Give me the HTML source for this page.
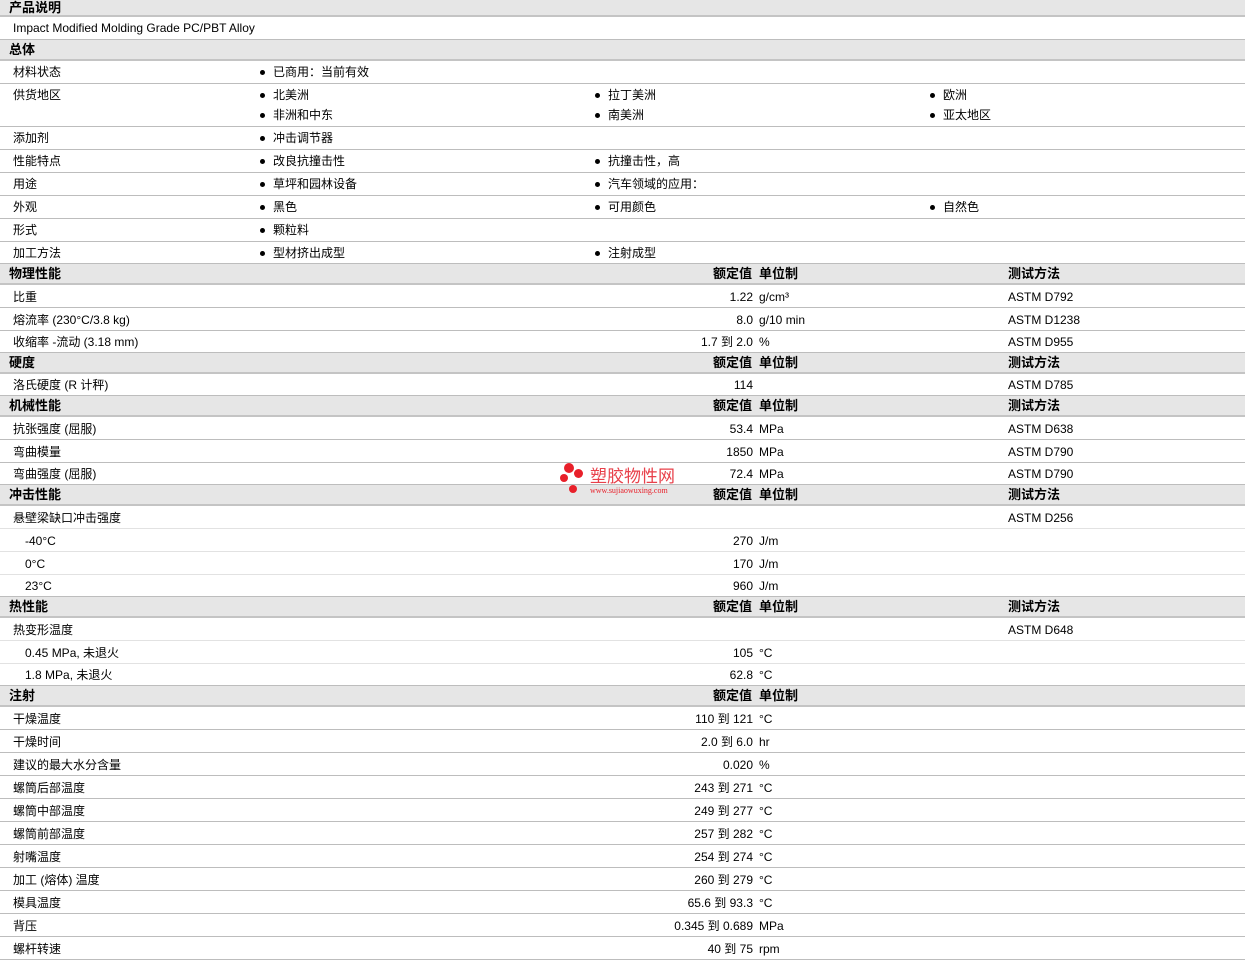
<!DOCTYPE html>
<html><head><meta charset="utf-8"><style>
*{margin:0;padding:0;box-sizing:border-box}
body{width:1245px;height:961px;background:#fff;position:relative;overflow:hidden;font-family:"Liberation Sans","Noto Sans CJK SC",sans-serif;font-size:12px;color:#000}
.r{position:absolute;left:0;width:1245px;border-bottom:1px solid #bdbdbd}
.r.l{border-bottom:1px solid #e2e2e2}
.h{background:#e6e6e6;font-weight:bold;font-size:13px;border-bottom:2px solid #c4c4c4}
.t{position:absolute;white-space:nowrap;line-height:14px}
.b::before{content:"";position:absolute;left:-13px;top:5px;width:5px;height:5px;border-radius:50%;background:#000}
.v{text-align:right;right:492px}
.wm{position:absolute;left:560px;top:463px}
</style></head><body>
<div id="c"></div>
<div class="wm">
<div style="position:absolute;left:4px;top:0;width:10px;height:10px;border-radius:50%;background:#e8202a"></div>
<div style="position:absolute;left:14px;top:6px;width:9px;height:9px;border-radius:50%;background:#e8202a"></div>
<div style="position:absolute;left:0;top:11px;width:8px;height:8px;border-radius:50%;background:#e8202a"></div>
<div style="position:absolute;left:9px;top:22px;width:8px;height:8px;border-radius:50%;background:#e8202a"></div>
<div class="t" style="left:30px;top:5px;font-size:17px;line-height:18px;color:#e8404a">塑胶物性网</div>
<div class="t" style="left:30px;top:23px;font-size:8px;line-height:10px;color:#e8202a;font-family:'Liberation Serif',serif">www.sujiaowuxing.com</div>
</div>
<script>
const rows=[
['h',0,17,'产品说明'],
['d',17,23,[[13,'Impact Modified Molding Grade PC/PBT Alloy']]],
['h',40,21,'总体'],
['d',61,23,[[13,'材料状态'],['b273','已商用：当前有效']]],
['d',84,43,[[13,'供货地区'],['b273','北美洲'],['b608','拉丁美洲'],['b943','欧洲'],['b273','非洲和中东',20],['b608','南美洲',20],['b943','亚太地区',20]]],
['d',127,23,[[13,'添加剂'],['b273','冲击调节器']]],
['d',150,23,[[13,'性能特点'],['b273','改良抗撞击性'],['b608','抗撞击性，高']]],
['d',173,23,[[13,'用途'],['b273','草坪和园林设备'],['b608','汽车领域的应用：']]],
['d',196,23,[[13,'外观'],['b273','黑色'],['b608','可用颜色'],['b943','自然色']]],
['d',219,23,[[13,'形式'],['b273','颗粒料']]],
['d',242,22,[[13,'加工方法'],['b273','型材挤出成型'],['b608','注射成型']]],
['H',264,21,'物理性能',1],
['v',285,23,'比重','1.22','g/cm³','ASTM D792'],
['v',308,23,'熔流率 (230°C/3.8 kg)','8.0','g/10 min','ASTM D1238'],
['v',331,22,'收缩率 -流动 (3.18 mm)','1.7 到  2.0','%','ASTM D955'],
['H',353,21,'硬度',1],
['v',374,22,'洛氏硬度 (R 计秤)','114','','ASTM D785'],
['H',396,21,'机械性能',1],
['v',417,23,'抗张强度 (屈服)','53.4','MPa','ASTM D638'],
['v',440,23,'弯曲模量','1850','MPa','ASTM D790'],
['v',463,22,'弯曲强度 (屈服)','72.4','MPa','ASTM D790'],
['H',485,21,'冲击性能',1],
['v',506,23,'悬壁梁缺口冲击强度','','','ASTM D256',0,1],
['v',529,23,'-40°C','270','J/m','',1,1],
['v',552,23,'0°C','170','J/m','',1,1],
['v',575,22,'23°C','960','J/m','',1],
['H',597,21,'热性能',1],
['v',618,23,'热变形温度','','','ASTM D648',0,1],
['v',641,23,'0.45 MPa, 未退火','105','°C','',1,1],
['v',664,22,'1.8 MPa, 未退火','62.8','°C','',1],
['H',686,21,'注射',0],
['v',707,23,'干燥温度','110 到  121','°C',''],
['v',730,23,'干燥时间','2.0 到  6.0','hr',''],
['v',753,23,'建议的最大水分含量','0.020','%',''],
['v',776,23,'螺筒后部温度','243 到  271','°C',''],
['v',799,23,'螺筒中部温度','249 到  277','°C',''],
['v',822,23,'螺筒前部温度','257 到  282','°C',''],
['v',845,23,'射嘴温度','254 到  274','°C',''],
['v',868,23,'加工 (熔体) 温度','260 到  279','°C',''],
['v',891,23,'模具温度','65.6 到  93.3','°C',''],
['v',914,23,'背压','0.345 到  0.689','MPa',''],
['v',937,23,'螺杆转速','40 到  75','rpm',''],
];
let h='';
for(const r of rows){
 const [k,top,ht]=r;
 if(k=='h'||k=='H'){
  const tt=(ht-16)/2;
  h+=`<div class="r h" style="top:${top}px;height:${ht}px"><div class="t" style="left:9px;top:${tt}px">${r[3]}</div>`;
  if(k=='H'){h+=`<div class="t" style="right:493px;top:${tt}px">额定值</div><div class="t" style="left:759px;top:${tt}px">单位制</div>`;
   if(r[4])h+=`<div class="t" style="left:1008px;top:${tt}px">测试方法</div>`;}
  h+='</div>';
 } else if(k=='d'){
  h+=`<div class="r" style="top:${top}px;height:${ht}px">`;
  for(const c of r[3]){let x=c[0],cls='t';if(typeof x=='string'){cls='t b';x=+x.slice(1);}
   h+=`<div class="${cls}" style="left:${x}px;top:${(c[2]||0)+4}px">${c[1]}</div>`;}
  h+='</div>';
 } else {
  const [,,,lab,val,unit,tm,ind,light]=r;
  const tt=(ht-2-14)/2+1;
  h+=`<div class="r${light?' l':''}" style="top:${top}px;height:${ht}px"><div class="t" style="left:${ind?25:13}px;top:${tt}px">${lab}</div><div class="t v" style="top:${tt}px">${val}</div><div class="t" style="left:759px;top:${tt}px">${unit}</div><div class="t" style="left:1008px;top:${tt}px">${tm}</div></div>`;
 }
}
document.getElementById('c').innerHTML=h;
</script>
</body></html>
